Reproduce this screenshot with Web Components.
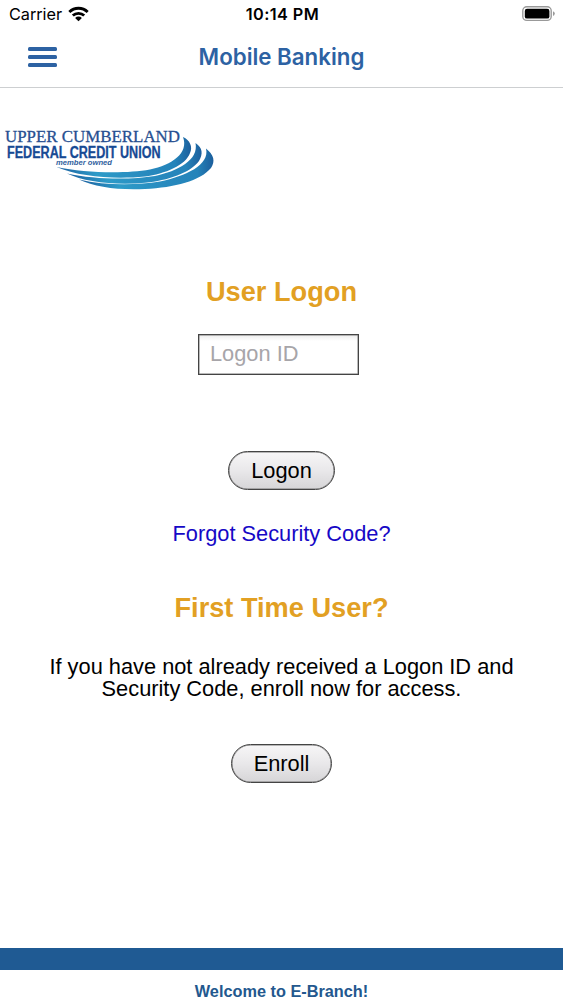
<!DOCTYPE html>
<html lang="en">
<head>
<meta charset="utf-8">
<title>Mobile Banking</title>
<style>
  body {
    margin: 0;
    background: #fff;
    font-family: "Liberation Sans", Arial, sans-serif;
  }
</style>
</head>
<body>
<bank-app>
  <status-bar slot="top" carrier="Carrier" time="10:14 PM"></status-bar>
  <nav-header slot="top">Mobile Banking</nav-header>
  <credit-logo></credit-logo>
  <section-title style="margin-top: 76px">User Logon</section-title>
  <text-field placeholder="Logon ID"></text-field>
  <pill-button style="margin-top: 76px; width: 107px">Logon</pill-button>
  <text-link>Forgot Security Code?</text-link>
  <section-title style="margin-top: 45px">First Time User?</section-title>
  <info-text>If you have not already received a Logon ID and<br>Security Code, enroll now for access.</info-text>
  <pill-button style="margin-top: 44px; width: 101px">Enroll</pill-button>
  <page-footer slot="bottom">Welcome to E-Branch!</page-footer>
</bank-app>

<script>
function define(name, html, setup) {
  const template = document.createElement('template');
  template.innerHTML = html;
  customElements.define(name, class extends HTMLElement {
    constructor() {
      super();
      this.attachShadow({ mode: 'open' });
      this.shadowRoot.appendChild(template.content.cloneNode(true));
    }
    connectedCallback() {
      if (setup) setup(this, this.shadowRoot);
    }
  });
}

define('status-bar', `
  <style>
    :host {
      display: grid;
      grid-template-columns: 1fr auto 1fr;
      align-items: center;
      height: 29px;
      padding: 0 7px 0 9px;
      font-family: Inter, Roboto, sans-serif;
      font-size: 16px;
      color: #000;
    }
    .left { display: flex; align-items: center; gap: 6px; }
    .carrier { font-size: 16.3px; letter-spacing: -0.05px; margin-top: -1px; }
    .time { font-weight: 600; font-size: 16.3px; letter-spacing: 0.4px; margin-top: -1px; }
    .battery { justify-self: end; margin-top: -1px; }
    .wifi { margin-top: -1px; }
    svg { display: block; }
  </style>
  <div class="left">
    <span class="carrier"></span>
    <svg class="wifi" width="21" height="16" viewBox="0 0 21 16">
      <g fill="none" stroke="#000" stroke-width="2.8">
        <path d="M1.3 6 A13.2 13.2 0 0 1 19.7 6"/>
        <path d="M4.8 9.6 A8.2 8.2 0 0 1 16.2 9.6"/>
      </g>
      <path d="M7.1 11.9 A4.9 4.9 0 0 1 13.9 11.9 L10.5 15.3 Z"/>
    </svg>
  </div>
  <span class="time"></span>
  <svg class="battery" width="34" height="16" viewBox="0 0 34 16">
    <rect x=".8" y=".8" width="28.4" height="13.6" rx="4" fill="none" stroke="#999" stroke-width="1.4"/>
    <rect x="2.8" y="2.8" width="24.6" height="9.8" rx="2.2"/>
    <path d="M31 5.2 Q32.8 6 32.8 7.6 Q32.8 9.2 31 10 Z" fill="#999"/>
  </svg>
`, (el, root) => {
  root.querySelector('.carrier').textContent = el.getAttribute('carrier');
  root.querySelector('.time').textContent = el.getAttribute('time');
});

define('nav-header', `
  <style>
    :host {
      display: grid;
      grid-template-columns: 1fr auto 1fr;
      align-items: center;
      box-sizing: border-box;
      height: 59px;
      padding: 0 28px 2px;
      border-bottom: 1px solid #cdcfd1;
      color: #2d62a3;
      font: 600 22.3px Inter, Roboto, sans-serif;
    }
    .menu { display: flex; flex-direction: column; gap: 4px; width: 29px; }
    .menu i { height: 4px; border-radius: 1.5px; background: #2d62a3; }
    .title { margin-top: -1px; }
  </style>
  <div class="menu"><i></i><i></i><i></i></div>
  <div class="title"><slot></slot></div>
`);

define('credit-logo', `
  <style>
    :host { display: block; align-self: flex-start; height: 85px; margin-top: 27px; }
    svg { display: block; }
  </style>
  <svg width="225" height="85" viewBox="0 0 225 85">
    <defs>
      <linearGradient id="wave" x1="0" y1="0" x2="1" y2="0">
        <stop offset="0" stop-color="#1b5f9f"/>
        <stop offset=".3" stop-color="#2d9bc8"/>
        <stop offset=".7" stop-color="#2788bd"/>
        <stop offset=".88" stop-color="#2484ba"/>
        <stop offset="1" stop-color="#1c5e9c"/>
      </linearGradient>
    </defs>
    <g fill="url(#wave)">
      <path d="M183 22 C190 25 193 32 190 38 C186 50 165 59 145 61.5 C115 64.5 80 62 56.5 52 C85 58 125 59 150 54.5 C172 50 189 38 183 22 Z"/>
      <path d="M195.5 28 C203 33 203 39 199 46 C190 58 168 65.5 145 67.8 C115 70.5 85 67 67 58.5 C95 64.5 130 65 155 61 C178 56 199 45 195.5 28 Z"/>
      <path d="M206 33.5 C214 40 215.5 46 211 53 C200 66 175 72.5 145 74 C118 75.3 95 72 79 64.5 C105 70.5 135 70.5 160 66.5 C186 61 210 50 206 33.5 Z"/>
    </g>
    <text x="5" y="27.2" textLength="175" lengthAdjust="spacingAndGlyphs" font-family="Liberation Serif, serif" font-size="17.3" fill="#274f91" stroke="#274f91" stroke-width=".3">UPPER CUMBERLAND</text>
    <text x="7" y="43" textLength="153.5" lengthAdjust="spacingAndGlyphs" font-family="Liberation Sans, sans-serif" font-weight="bold" font-size="15.8" fill="#174a94" stroke="#174a94" stroke-width=".3">FEDERAL CREDIT UNION</text>
    <text x="56" y="50" textLength="56" lengthAdjust="spacingAndGlyphs" font-family="Liberation Sans, sans-serif" font-weight="bold" font-style="italic" font-size="7.2" fill="#315f9e">member owned</text>
  </svg>
`);

define('section-title', `
  <style>
    :host {
      display: block;
      color: #e2a023;
      font-size: 27.2px;
      font-weight: bold;
      line-height: 32px;
    }
  </style>
  <slot></slot>
`);

define('text-field', `
  <style>
    :host { display: block; margin: 26px 6px 0 0; }
    input {
      display: block;
      box-sizing: border-box;
      width: 161px;
      height: 41px;
      margin: 0;
      padding: 0 11px 2px;
      border: 1px solid #444;
      border-radius: 0;
      background: linear-gradient(#ececec, #fff 6px);
      box-shadow: inset 0 0 0 .5px #777;
      font: 21.8px "Liberation Sans", Arial, sans-serif;
      outline: none;
    }
    input::placeholder { color: #a7a5a9; opacity: 1; }
  </style>
  <input type="text">
`, (el, root) => {
  root.querySelector('input').placeholder = el.getAttribute('placeholder');
});

define('pill-button', `
  <style>
    :host { display: block; }
    button {
      display: block;
      box-sizing: border-box;
      width: 100%;
      height: 39px;
      padding: 0;
      border: 1px solid #444;
      border-radius: 20px;
      background: linear-gradient(#f7f6f7, #e9e8ea 50%, #d6d5d7);
      box-shadow: inset 0 0 0 .5px #777;
      color: #000;
      font: 21.8px/36px "Liberation Sans", Arial, sans-serif;
    }
  </style>
  <button type="button"><slot></slot></button>
`);

define('text-link', `
  <style>
    :host { display: block; margin-top: 31px; font-size: 21.8px; line-height: 26px; }
    a { color: #1608c6; text-decoration: none; }
  </style>
  <a href="#"><slot></slot></a>
`);

define('info-text', `
  <style>
    :host {
      display: block;
      margin-top: 32px;
      font-size: 21.8px;
      line-height: 22px;
      text-align: center;
      white-space: nowrap;
      color: #000;
    }
  </style>
  <slot></slot>
`);

define('page-footer', `
  <style>
    :host {
      display: block;
      height: 30px;
      border-top: 22px solid #1f5a93;
      color: #23588e;
      font-size: 16.3px;
      font-weight: bold;
      line-height: 43px;
      text-align: center;
    }
  </style>
  <slot></slot>
`);

define('bank-app', `
  <style>
    :host {
      display: flex;
      flex-direction: column;
      height: 1000px;
      overflow: hidden;
    }
    main {
      flex: 1;
      display: flex;
      flex-direction: column;
      align-items: center;
    }
  </style>
  <slot name="top"></slot>
  <main><slot></slot></main>
  <slot name="bottom"></slot>
`);
</script>
</body>
</html>
